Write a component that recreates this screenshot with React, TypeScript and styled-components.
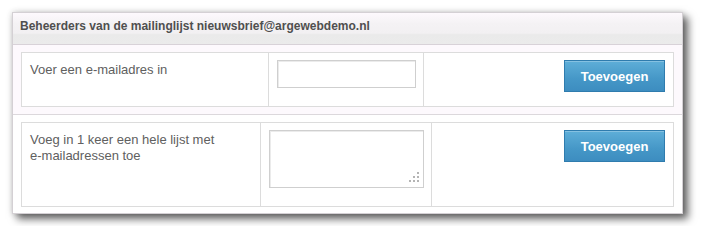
import React from 'react';
import styled, { createGlobalStyle } from 'styled-components';

const GlobalStyle = createGlobalStyle`
  body {
    margin: 0;
    background: #ffffff;
    font-family: "Liberation Sans", Arial, sans-serif;
  }
`;

const Page = styled.div`
  padding: 12px;
`;

const Panel = styled.div`
  width: 669px;
  border: 1px solid #d4d0d4;
  background: #fdf9fd;
  box-shadow: 5px 5px 8px rgba(0, 0, 0, 0.6), 0 0 6px rgba(0, 0, 0, 0.18);
`;

const Header = styled.div`
  height: 27px;
  line-height: 27px;
  padding: 0 0 4px 7px;
  border-bottom: 1px solid #d8d2d8;
  background: linear-gradient(#fdf9fd 0%, #f4f2f4 35%, #f2f0f2 65%, #eaeaea 70%, #ebebeb 100%);
  color: #4f4f4f;
  font-size: 12px;
  font-weight: bold;
`;

const Section = styled.div<{ $last?: boolean; $bg: string }>`
  padding: 7px 8px ${p => (p.$last ? '6px' : '7px')};
  background: ${p => p.$bg};
  border-bottom: ${p => (p.$last ? 'none' : '1px solid #dcd8dc')};
`;

const FormTable = styled.div<{ $cols: string; $height: number }>`
  display: grid;
  grid-template-columns: ${p => p.$cols};
  height: ${p => p.$height}px;
  border: 1px solid #dcdcdc;
  background: #ffffff;
`;

const Cell = styled.div<{ $align?: 'left' | 'right' }>`
  padding: 7px 8px;
  display: flex;
  align-items: flex-start;
  justify-content: ${p => (p.$align === 'right' ? 'flex-end' : 'flex-start')};
  & + & {
    border-left: 1px solid #dcdcdc;
  }
`;

const Label = styled.div`
  padding-top: 2px;
  font-size: 13px;
  line-height: 16px;
  color: #606060;
`;

const TextInput = styled.input`
  box-sizing: border-box;
  width: 139px;
  height: 28px;
  margin: 0;
  border: 1px solid #cfcfcf;
  box-shadow: inset 1px 1px 0 #ebebeb;
  background: #ffffff;
  outline: none;
`;

const AreaWrap = styled.div`
  position: relative;
  width: 155px;
  height: 58px;
`;

const TextArea = styled.textarea`
  box-sizing: border-box;
  display: block;
  width: 155px;
  height: 58px;
  margin: 0;
  border: 1px solid #cfcfcf;
  box-shadow: inset 1px 1px 0 #ebebeb;
  resize: none;
  outline: none;
`;

const Grip = styled.svg`
  position: absolute;
  right: 5px;
  bottom: 6px;
`;

const AddButton = styled.button`
  box-sizing: border-box;
  width: 101px;
  height: 32px;
  margin: 0;
  padding: 0;
  border: 1px solid #2f7cae;
  background: linear-gradient(#5eaed8, #4597c7 60%, #3d8dc0);
  box-shadow: inset 0 1px 0 rgba(255, 255, 255, 0.25);
  color: #ffffff;
  font-family: "Liberation Sans", Arial, sans-serif;
  font-size: 13px;
  font-weight: bold;
  cursor: pointer;
`;

function ResizeGrip (): React.ReactElement {
  const dots = [[8, 0], [4, 4], [8, 4], [0, 8], [4, 8], [8, 8]];
  return (
    <Grip width='10' height='10' viewBox='0 0 10 10'>
      {dots.map(([x, y]) => (
        <rect key={`${x}-${y}`} x={x} y={y} width='2' height='2' fill='#b4b4b4' />
      ))}
    </Grip>
  );
}

export default function App (): React.ReactElement {
  return (
    <>
      <GlobalStyle />
      <Page>
        <Panel>
          <Header>Beheerders van de mailinglijst nieuwsbrief@argewebdemo.nl</Header>
          <Section $bg='#fdf9fd'>
            <FormTable $cols='246px 155px 1fr' $height={53}>
              <Cell><Label>Voer een e-mailadres in</Label></Cell>
              <Cell><TextInput type='text' /></Cell>
              <Cell $align='right'><AddButton>Toevoegen</AddButton></Cell>
            </FormTable>
          </Section>
          <Section $bg='#ffffff' $last>
            <FormTable $cols='238px 171px 1fr' $height={83}>
              <Cell>
                <Label>Voeg in 1 keer een hele lijst met<br />e-mailadressen toe</Label>
              </Cell>
              <Cell>
                <AreaWrap>
                  <TextArea />
                  <ResizeGrip />
                </AreaWrap>
              </Cell>
              <Cell $align='right'><AddButton>Toevoegen</AddButton></Cell>
            </FormTable>
          </Section>
        </Panel>
      </Page>
    </>
  );
}
